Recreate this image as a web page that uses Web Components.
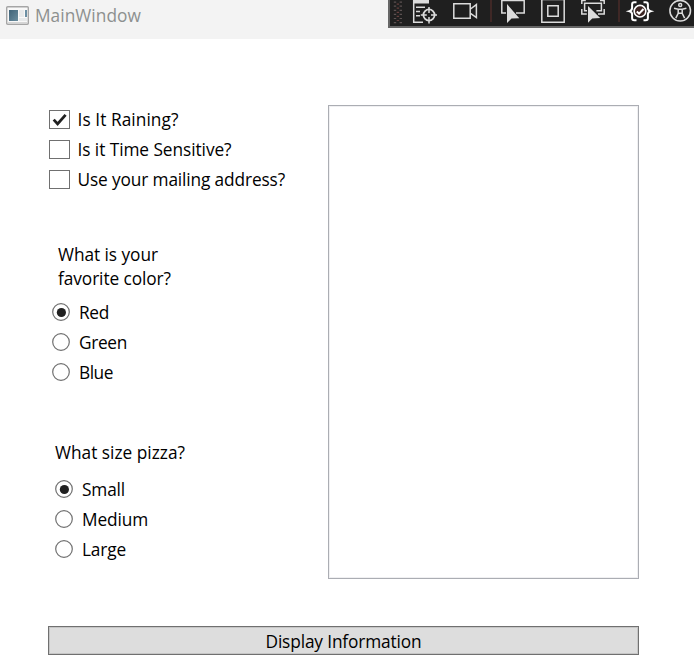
<!DOCTYPE html>
<html lang="en"><head><meta charset="utf-8"><title>MainWindow</title>
<style>
html,body{margin:0;height:656px;overflow:hidden;background:#fff}
body{font:17.3px/24px "Open Sans","Noto Sans",sans-serif;color:#000}
</style></head><body>
<main-window></main-window>
<script>
class Base extends HTMLElement{
  constructor(){super();this.attachShadow({mode:'open'}).innerHTML=this.render();}
}
// Text that spreads its letters to a given advance width
customElements.define('fit-text',class extends Base{
  render(){return `<style>:host{display:block;white-space:nowrap}span{display:inline-block}</style><span><slot></slot></span>`}
  connectedCallback(){
    const s=this.shadowRoot.querySelector('span'),w=+this.getAttribute('width'),n=this.textContent.length;
    if(w)s.style.letterSpacing=((w-s.getBoundingClientRect().width)/n)+'px';
  }
});
customElements.define('check-option',class extends Base{
  render(){return `<style>
  :host{display:flex;align-items:center;height:30px;gap:7.5px}
  i{box-sizing:border-box;width:21px;height:19px;margin-bottom:1px;border:1px solid #707070;background:#fff;display:block}
  svg{display:none;width:19px;height:17px}:host([checked]) svg{display:block}
  </style><i><svg viewBox="0 0 19 17"><path d="M3.7 8.6 7.6 12.9 15.6 3.8" fill="none" stroke="#212121" stroke-width="2.8"/></svg></i><slot></slot>`}
});
customElements.define('radio-option',class extends Base{
  render(){return `<style>
  :host{display:flex;align-items:center;height:30px;gap:9px}
  svg{width:18px;height:18px;margin-bottom:2px;display:block}.dot{display:none}:host([checked]) .dot{display:block}
  </style><svg viewBox="0 0 18 18"><circle cx="9" cy="9" r="8.3" fill="#fff" stroke="#707070" stroke-width="1.2"/><circle class="dot" cx="9.4" cy="9.5" r="4.6" fill="#212121"/></svg><slot></slot>`}
});
customElements.define('debug-toolbar',class extends Base{
  render(){return `<style>
  :host{display:flex;box-sizing:border-box;width:306px;height:28px;background:#1f1f1f;border-left:2px solid #666;border-bottom:2px solid #666;overflow:hidden}
  svg{display:block;flex:none;height:26px;fill:none;stroke:#dcdcdc;stroke-width:1.5}
  .f{fill:#dcdcdc;stroke:none}
  </style>
  <svg width="20" viewBox="390 0 20 26"><g stroke="#5c5252" stroke-width="2.4" stroke-dasharray="1.2 2.9"><path d="M395 1.5V24M400.8 1.5V24"/><path d="M397.9 3.5V22" stroke="#653f3d"/></g></svg>
  <svg width="35" viewBox="410 0 35 26"><path class="f" d="M413 0h16v3.5h-16z"/><path d="M413.7 0V22.3H423M416 7.2h9M416 11.5h4M416 15.8h4"/><circle cx="429" cy="15" r="5.6" stroke-width="1.8"/><path d="M429 7v6M429 17v6.5M420.8 15h6M431 15h6"/></svg>
  <svg width="40" viewBox="445 0 40 26"><path d="M453.8 3.8h16.4v14.4h-16.4zM470.5 9l5.9-4.4v13l-5.9-4.3"/></svg>
  <svg width="10" viewBox="485 0 10 26"><path d="M491 0v22" stroke="#4b2d2a"/></svg>
  <svg width="38" viewBox="495 0 38 26"><path d="M506 13h-4.2V.5h22.4V13H516"/><path class="f" d="M507 4v19l4.5-4.5 7.8-.3z"/></svg>
  <svg width="40" viewBox="533 0 40 26"><path d="M541.8-.5h22.4v22.7h-22.4zM547.8 5.8h10.4v10.4h-10.4z"/></svg>
  <svg width="40" viewBox="573 0 40 26"><path d="M581.8 4V.5h4M600 .5h4.2V4M581.8 9v5h5M598 14h6.2V9M587 10.8h-2.4V3.3h16.8v7.5h-5"/><path class="f" d="M588 6v16.7l4.2-4.2 8-.4z"/></svg>
  <svg width="10" viewBox="613 0 10 26"><path d="M619 0v22" stroke="#4b2d2a"/></svg>
  <svg width="40" viewBox="623 0 40 26"><g stroke="#fff" stroke-width="2"><path d="M636.5 2.2h-2.2q-2.2 0-2.2 2.2v3.4q0 2.7-2.6 3.4 2.6.7 2.6 3.4V18q0 2.2 2.2 2.2h2.2M643.5 2.2h2.2q2.2 0 2.2 2.2v3.4q0 2.7 2.6 3.4-2.6.7-2.6 3.4V18q0 2.2-2.2 2.2h-2.2"/><circle cx="640" cy="11.2" r="5.8" fill="#3b2421" stroke-width="1.6"/><path d="m636.8 11.5 2.3 2.2 4.4-4.7"/></g></svg>
  <svg width="31" viewBox="663 0 31 26"><circle cx="680.2" cy="10.7" r="10.3"/><circle cx="680.2" cy="5" r="1.5"/><path d="M674 8.2 678.2 9.3h4l4.2-1.1M678.2 9.3v4l-2.4 4.9M682.2 9.3v4l2.4 4.9M678.4 13.3h3.6" stroke-width="1.5"/></svg>`}
});
customElements.define('title-bar',class extends Base{
  render(){return `<style>
  :host{display:flex;align-items:flex-start;justify-content:space-between;height:39px;background:#f3f3f3}
  .name{display:flex;align-items:center;gap:6px;padding:4px 0 0 6px;height:24px;color:#8d908f}
  svg{display:block;margin-bottom:1px}
  </style><div class="name"><svg width="23" height="19" viewBox="0 0 23 19"><defs><linearGradient id="g" x2="1" y2="1"><stop stop-color="#3f6378"/><stop offset="1" stop-color="#6c8e9f"/></linearGradient></defs><rect x=".7" y=".7" width="21.6" height="17.6" rx="1" fill="#f8f8f8" stroke="#a5a5a5" stroke-width="1.4"/><path fill="#d6d6d6" d="M2 16h19v1.5H2z"/><path fill="url(#g)" d="M3 4h9v11H3z"/><path fill="#e7e9ea" d="M13 4h5v7h-5zM13 12h8v3h-8z"/><path fill="#6b8fa3" d="M19 4h2v7h-2z"/></svg><slot></slot></div><debug-toolbar></debug-toolbar>`}
});
customElements.define('list-panel',class extends Base{
  render(){return `<style>:host{display:block;box-sizing:border-box;width:311px;height:474px;border:1px solid #abadb3;box-shadow:inset 0 0 0 1px #f0f0f2}</style><slot></slot>`}
});
customElements.define('push-button',class extends Base{
  render(){return `<style>:host{display:flex;box-sizing:border-box;justify-content:center;align-items:center;width:591px;height:29px;background:#ddd;border:1px solid #707070;box-shadow:inset 0 0 0 1px #c6c6c6;padding-top:2px}</style><slot></slot>`}
});
customElements.define('main-window',class extends Base{
  render(){return `<style>
  :host{display:block;height:656px}
  main{display:grid;grid-template-columns:280px 311px;padding:66px 0 0 48px}
  .checks{padding:0 0 0 1px}
  .q1{padding:48px 0 0 10px}
  .r1{padding:7px 0 0 4px}
  .q2{padding:53px 0 0 7px}
  .r2{padding:10px 0 0 7px}
  push-button{grid-column:1/3;margin-top:47px}
  </style>
  <title-bar><fit-text width="106">MainWindow</fit-text></title-bar>
  <main><section>
  <div class="checks"><check-option checked><fit-text width="101">Is It Raining?</fit-text></check-option><check-option><fit-text width="154">Is it Time Sensitive?</fit-text></check-option><check-option><fit-text width="207.5">Use your mailing address?</fit-text></check-option></div>
  <div class="q1"><fit-text width="100">What is your</fit-text><fit-text width="113">favorite color?</fit-text></div>
  <div class="r1"><radio-option checked><fit-text width="30">Red</fit-text></radio-option><radio-option><fit-text width="48">Green</fit-text></radio-option><radio-option><fit-text width="34">Blue</fit-text></radio-option></div>
  <div class="q2"><fit-text width="130">What size pizza?</fit-text></div>
  <div class="r2"><radio-option checked><fit-text width="43">Small</fit-text></radio-option><radio-option><fit-text width="66">Medium</fit-text></radio-option><radio-option><fit-text width="44">Large</fit-text></radio-option></div>
  </section><list-panel></list-panel>
  <push-button><fit-text width="156">Display Information</fit-text></push-button></main>`}
});
</script></body></html>
